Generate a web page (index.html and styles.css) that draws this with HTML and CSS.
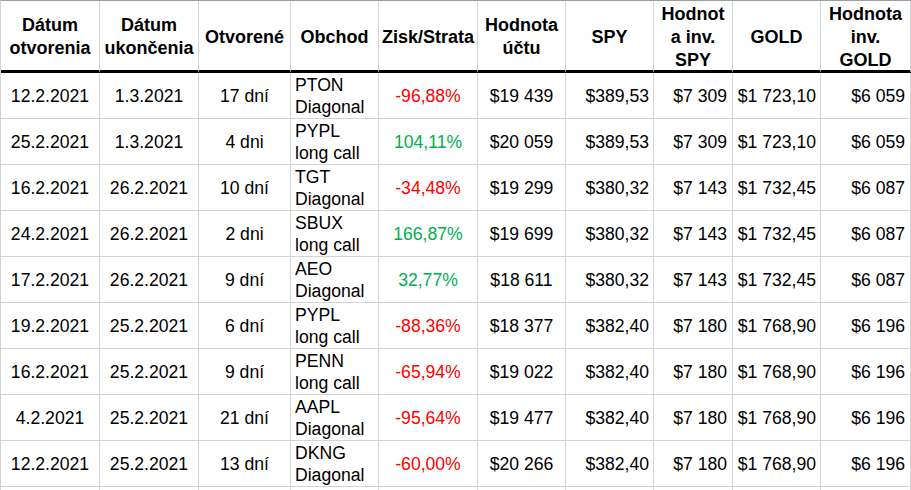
FILE: index.html
```html
<!DOCTYPE html>
<html lang="sk">
<head>
<meta charset="utf-8">
<title>Obchody</title>
<link rel="stylesheet" href="styles.css">
</head>
<body>
<div class="sheet">
  <div class="h">Dátum<br>otvorenia</div>
  <div class="h">Dátum<br>ukončenia</div>
  <div class="h">Otvorené</div>
  <div class="h">Obchod</div>
  <div class="h">Zisk/Strata</div>
  <div class="h">Hodnota<br>účtu</div>
  <div class="h">SPY</div>
  <div class="h">Hodnot<br>a inv.<br>SPY</div>
  <div class="h">GOLD</div>
  <div class="h">Hodnota<br>inv.<br>GOLD</div>

  <div class="c mid">12.2.2021</div><div class="c mid">1.3.2021</div><div class="c mid">17 dní</div><div class="c trade">PTON<br>Diagonal</div><div class="c mid neg">-96,88%</div><div class="c mid">$19&nbsp;439</div><div class="c right">$389,53</div><div class="c right r5">$7&nbsp;309</div><div class="c right">$1&nbsp;723,10</div><div class="c right r5">$6&nbsp;059</div>

  <div class="c mid">25.2.2021</div><div class="c mid">1.3.2021</div><div class="c mid">4 dni</div><div class="c trade">PYPL<br>long call</div><div class="c mid pos">104,11%</div><div class="c mid">$20&nbsp;059</div><div class="c right">$389,53</div><div class="c right r5">$7&nbsp;309</div><div class="c right">$1&nbsp;723,10</div><div class="c right r5">$6&nbsp;059</div>

  <div class="c mid">16.2.2021</div><div class="c mid">26.2.2021</div><div class="c mid">10 dní</div><div class="c trade">TGT<br>Diagonal</div><div class="c mid neg">-34,48%</div><div class="c mid">$19&nbsp;299</div><div class="c right">$380,32</div><div class="c right r5">$7&nbsp;143</div><div class="c right">$1&nbsp;732,45</div><div class="c right r5">$6&nbsp;087</div>

  <div class="c mid">24.2.2021</div><div class="c mid">26.2.2021</div><div class="c mid">2 dni</div><div class="c trade">SBUX<br>long call</div><div class="c mid pos">166,87%</div><div class="c mid">$19&nbsp;699</div><div class="c right">$380,32</div><div class="c right r5">$7&nbsp;143</div><div class="c right">$1&nbsp;732,45</div><div class="c right r5">$6&nbsp;087</div>

  <div class="c mid">17.2.2021</div><div class="c mid">26.2.2021</div><div class="c mid">9 dní</div><div class="c trade">AEO<br>Diagonal</div><div class="c mid pos">32,77%</div><div class="c mid">$18&nbsp;611</div><div class="c right">$380,32</div><div class="c right r5">$7&nbsp;143</div><div class="c right">$1&nbsp;732,45</div><div class="c right r5">$6&nbsp;087</div>

  <div class="c mid">19.2.2021</div><div class="c mid">25.2.2021</div><div class="c mid">6 dní</div><div class="c trade">PYPL<br>long call</div><div class="c mid neg">-88,36%</div><div class="c mid">$18&nbsp;377</div><div class="c right">$382,40</div><div class="c right r5">$7&nbsp;180</div><div class="c right">$1&nbsp;768,90</div><div class="c right r5">$6&nbsp;196</div>

  <div class="c mid">16.2.2021</div><div class="c mid">25.2.2021</div><div class="c mid">9 dní</div><div class="c trade">PENN<br>long call</div><div class="c mid neg">-65,94%</div><div class="c mid">$19&nbsp;022</div><div class="c right">$382,40</div><div class="c right r5">$7&nbsp;180</div><div class="c right">$1&nbsp;768,90</div><div class="c right r5">$6&nbsp;196</div>

  <div class="c mid">4.2.2021</div><div class="c mid">25.2.2021</div><div class="c mid">21 dní</div><div class="c trade">AAPL<br>Diagonal</div><div class="c mid neg">-95,64%</div><div class="c mid">$19&nbsp;477</div><div class="c right">$382,40</div><div class="c right r5">$7&nbsp;180</div><div class="c right">$1&nbsp;768,90</div><div class="c right r5">$6&nbsp;196</div>

  <div class="c mid">12.2.2021</div><div class="c mid">25.2.2021</div><div class="c mid">13 dní</div><div class="c trade">DKNG<br>Diagonal</div><div class="c mid neg">-60,00%</div><div class="c mid">$20&nbsp;266</div><div class="c right">$382,40</div><div class="c right r5">$7&nbsp;180</div><div class="c right">$1&nbsp;768,90</div><div class="c right r5">$6&nbsp;196</div>

  <div class="c"></div><div class="c"></div><div class="c"></div><div class="c"></div><div class="c"></div><div class="c"></div><div class="c"></div><div class="c"></div><div class="c"></div><div class="c"></div>
</div>
</body>
</html>
```

FILE: styles.css
```css
html, body {
  margin: 0;
  padding: 0;
  background: #ffffff;
}

body {
  font-family: "Liberation Sans", Arial, sans-serif;
  color: #000000;
  overflow: hidden;
}

.sheet {
  display: grid;
  grid-template-columns: 99px 99px 92px 88px 99px 88px 88px 79px 88px 90px;
  width: max-content;
  border-left: 1px solid #d4d4d4;
  border-top: 1px solid #9e9e9e;
}

.h {
  box-sizing: border-box;
  height: 72px;
  padding-top: 3px;
  border-right: 1px solid #d4d4d4;
  border-bottom: 3px solid #000000;
  display: flex;
  align-items: center;
  justify-content: center;
  text-align: center;
  font-weight: bold;
  font-size: 18px;
  line-height: 23px;
  white-space: nowrap;
}

.c {
  box-sizing: border-box;
  height: 46px;
  border-right: 1px solid #d4d4d4;
  border-bottom: 1px solid #d4d4d4;
  display: flex;
  align-items: center;
  font-size: 17.6px;
  line-height: 22px;
  white-space: nowrap;
}

.mid {
  justify-content: center;
}

.right {
  justify-content: flex-end;
  padding-right: 4px;
}

.r5 {
  padding-right: 5px;
}

.trade {
  align-items: flex-end;
  padding-left: 4px;
}

.neg {
  color: #ff0000;
}

.pos {
  color: #00b050;
}
```
